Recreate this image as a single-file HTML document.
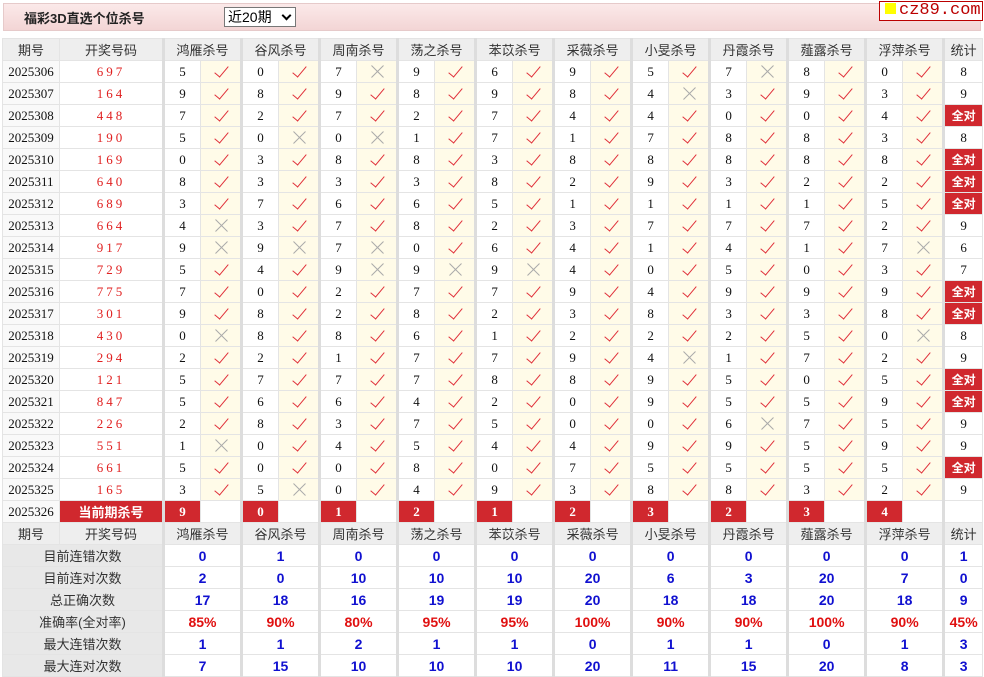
<!DOCTYPE html>
<html><head><meta charset="utf-8"><style>
body{margin:0;width:984px;height:677px;background:#fff;font-family:"Liberation Sans","Noto Sans CJK SC",sans-serif;overflow:hidden;position:relative}
.top{position:absolute;left:3px;top:3px;width:978px;height:28px;background:linear-gradient(#fbe9e9,#f3d5d5);border:1px solid #e6caca;box-sizing:border-box}
.top b{position:absolute;left:20px;top:4px;font-size:13px;color:#222}
.sel{position:absolute;left:220px;top:3px;width:72px;height:20px;border:1px solid #777;background:#fff;font-size:14px;box-sizing:border-box;padding-left:3px;line-height:18px}
.sel i{position:absolute;right:5px;top:4px;width:5px;height:5px;border-right:2px solid #000;border-bottom:2px solid #000;transform:rotate(45deg)}
.logo{position:absolute;left:879px;top:1px;width:104px;height:20px;border:1px solid #b00;background:#fff;box-sizing:border-box;font-family:"Liberation Mono",monospace;font-size:17px;color:#b00;line-height:18px}
.logo span{display:inline-block;width:11px;height:11px;background:#ff0;margin:0 3px 0 5px}
table{position:absolute;left:2px;top:38px;border-collapse:collapse;table-layout:fixed;width:980px}
td{height:21px;padding:0;border:1px solid #e4e4e4;text-align:center;font-family:"Liberation Serif","Noto Sans CJK SC",serif;font-size:13px;color:#111;overflow:hidden;white-space:nowrap}
.h td{background:#eee;font-family:"Liberation Sans","Noto Sans CJK SC",sans-serif;color:#333}
.p{background:#f9f9f9}
.n{color:#e02020;letter-spacing:3px}
.g{border-left:3px solid #ddd}
.y,.x{background:#fffbe8;position:relative}
.y::after{content:"";position:absolute;left:17px;top:2px;width:6px;height:13px;border-right:1.6px solid #e0303a;border-bottom:1.6px solid #e0303a;transform:rotate(40deg)}
.x::before,.x::after{content:"";position:absolute;left:12px;top:10px;width:17px;height:1px;background:#aaa;transform:rotate(45deg)}
.x::after{transform:rotate(-45deg)}
.a{background:#d0282e;color:#fff;font-family:"Liberation Sans","Noto Sans CJK SC",sans-serif;font-weight:bold;font-size:12px}
.r{background:#d0282e;color:#fff;font-weight:bold}
.l{background:#e8e8e8;font-family:"Liberation Sans","Noto Sans CJK SC",sans-serif;color:#333}
.s td.v{font-family:"Liberation Sans",sans-serif;font-weight:bold;color:#1010d0;font-size:14px}
.s td.v.pc{color:#e01010}
</style></head><body>
<div class="top"><b>福彩3D直选个位杀号</b><div class="sel">近20期<i></i></div></div>
<div class="logo"><span></span>cz89.com</div>
<table>
<colgroup><col style="width:57px"><col style="width:104px"><col style="width:37px"><col style="width:41px"><col style="width:37px"><col style="width:41px"><col style="width:37px"><col style="width:41px"><col style="width:37px"><col style="width:41px"><col style="width:37px"><col style="width:41px"><col style="width:37px"><col style="width:41px"><col style="width:37px"><col style="width:41px"><col style="width:37px"><col style="width:41px"><col style="width:37px"><col style="width:41px"><col style="width:37px"><col style="width:41px"><col style="width:39px"></colgroup>
<tr class="h"><td>期号</td><td>开奖号码</td><td class="g" colspan="2">鸿雁杀号</td><td class="g" colspan="2">谷风杀号</td><td class="g" colspan="2">周南杀号</td><td class="g" colspan="2">荡之杀号</td><td class="g" colspan="2">苯苡杀号</td><td class="g" colspan="2">采薇杀号</td><td class="g" colspan="2">小旻杀号</td><td class="g" colspan="2">丹霞杀号</td><td class="g" colspan="2">薤露杀号</td><td class="g" colspan="2">浮萍杀号</td><td class="g">统计</td></tr>
<tr><td class="p">2025306</td><td class="n">697</td><td class="g">5</td><td class="y"></td><td class="g">0</td><td class="y"></td><td class="g">7</td><td class="x"></td><td class="g">9</td><td class="y"></td><td class="g">6</td><td class="y"></td><td class="g">9</td><td class="y"></td><td class="g">5</td><td class="y"></td><td class="g">7</td><td class="x"></td><td class="g">8</td><td class="y"></td><td class="g">0</td><td class="y"></td><td class="g">8</td></tr>
<tr><td class="p">2025307</td><td class="n">164</td><td class="g">9</td><td class="y"></td><td class="g">8</td><td class="y"></td><td class="g">9</td><td class="y"></td><td class="g">8</td><td class="y"></td><td class="g">9</td><td class="y"></td><td class="g">8</td><td class="y"></td><td class="g">4</td><td class="x"></td><td class="g">3</td><td class="y"></td><td class="g">9</td><td class="y"></td><td class="g">3</td><td class="y"></td><td class="g">9</td></tr>
<tr><td class="p">2025308</td><td class="n">448</td><td class="g">7</td><td class="y"></td><td class="g">2</td><td class="y"></td><td class="g">7</td><td class="y"></td><td class="g">2</td><td class="y"></td><td class="g">7</td><td class="y"></td><td class="g">4</td><td class="y"></td><td class="g">4</td><td class="y"></td><td class="g">0</td><td class="y"></td><td class="g">0</td><td class="y"></td><td class="g">4</td><td class="y"></td><td class="g a">全对</td></tr>
<tr><td class="p">2025309</td><td class="n">190</td><td class="g">5</td><td class="y"></td><td class="g">0</td><td class="x"></td><td class="g">0</td><td class="x"></td><td class="g">1</td><td class="y"></td><td class="g">7</td><td class="y"></td><td class="g">1</td><td class="y"></td><td class="g">7</td><td class="y"></td><td class="g">8</td><td class="y"></td><td class="g">8</td><td class="y"></td><td class="g">3</td><td class="y"></td><td class="g">8</td></tr>
<tr><td class="p">2025310</td><td class="n">169</td><td class="g">0</td><td class="y"></td><td class="g">3</td><td class="y"></td><td class="g">8</td><td class="y"></td><td class="g">8</td><td class="y"></td><td class="g">3</td><td class="y"></td><td class="g">8</td><td class="y"></td><td class="g">8</td><td class="y"></td><td class="g">8</td><td class="y"></td><td class="g">8</td><td class="y"></td><td class="g">8</td><td class="y"></td><td class="g a">全对</td></tr>
<tr><td class="p">2025311</td><td class="n">640</td><td class="g">8</td><td class="y"></td><td class="g">3</td><td class="y"></td><td class="g">3</td><td class="y"></td><td class="g">3</td><td class="y"></td><td class="g">8</td><td class="y"></td><td class="g">2</td><td class="y"></td><td class="g">9</td><td class="y"></td><td class="g">3</td><td class="y"></td><td class="g">2</td><td class="y"></td><td class="g">2</td><td class="y"></td><td class="g a">全对</td></tr>
<tr><td class="p">2025312</td><td class="n">689</td><td class="g">3</td><td class="y"></td><td class="g">7</td><td class="y"></td><td class="g">6</td><td class="y"></td><td class="g">6</td><td class="y"></td><td class="g">5</td><td class="y"></td><td class="g">1</td><td class="y"></td><td class="g">1</td><td class="y"></td><td class="g">1</td><td class="y"></td><td class="g">1</td><td class="y"></td><td class="g">5</td><td class="y"></td><td class="g a">全对</td></tr>
<tr><td class="p">2025313</td><td class="n">664</td><td class="g">4</td><td class="x"></td><td class="g">3</td><td class="y"></td><td class="g">7</td><td class="y"></td><td class="g">8</td><td class="y"></td><td class="g">2</td><td class="y"></td><td class="g">3</td><td class="y"></td><td class="g">7</td><td class="y"></td><td class="g">7</td><td class="y"></td><td class="g">7</td><td class="y"></td><td class="g">2</td><td class="y"></td><td class="g">9</td></tr>
<tr><td class="p">2025314</td><td class="n">917</td><td class="g">9</td><td class="x"></td><td class="g">9</td><td class="x"></td><td class="g">7</td><td class="x"></td><td class="g">0</td><td class="y"></td><td class="g">6</td><td class="y"></td><td class="g">4</td><td class="y"></td><td class="g">1</td><td class="y"></td><td class="g">4</td><td class="y"></td><td class="g">1</td><td class="y"></td><td class="g">7</td><td class="x"></td><td class="g">6</td></tr>
<tr><td class="p">2025315</td><td class="n">729</td><td class="g">5</td><td class="y"></td><td class="g">4</td><td class="y"></td><td class="g">9</td><td class="x"></td><td class="g">9</td><td class="x"></td><td class="g">9</td><td class="x"></td><td class="g">4</td><td class="y"></td><td class="g">0</td><td class="y"></td><td class="g">5</td><td class="y"></td><td class="g">0</td><td class="y"></td><td class="g">3</td><td class="y"></td><td class="g">7</td></tr>
<tr><td class="p">2025316</td><td class="n">775</td><td class="g">7</td><td class="y"></td><td class="g">0</td><td class="y"></td><td class="g">2</td><td class="y"></td><td class="g">7</td><td class="y"></td><td class="g">7</td><td class="y"></td><td class="g">9</td><td class="y"></td><td class="g">4</td><td class="y"></td><td class="g">9</td><td class="y"></td><td class="g">9</td><td class="y"></td><td class="g">9</td><td class="y"></td><td class="g a">全对</td></tr>
<tr><td class="p">2025317</td><td class="n">301</td><td class="g">9</td><td class="y"></td><td class="g">8</td><td class="y"></td><td class="g">2</td><td class="y"></td><td class="g">8</td><td class="y"></td><td class="g">2</td><td class="y"></td><td class="g">3</td><td class="y"></td><td class="g">8</td><td class="y"></td><td class="g">3</td><td class="y"></td><td class="g">3</td><td class="y"></td><td class="g">8</td><td class="y"></td><td class="g a">全对</td></tr>
<tr><td class="p">2025318</td><td class="n">430</td><td class="g">0</td><td class="x"></td><td class="g">8</td><td class="y"></td><td class="g">8</td><td class="y"></td><td class="g">6</td><td class="y"></td><td class="g">1</td><td class="y"></td><td class="g">2</td><td class="y"></td><td class="g">2</td><td class="y"></td><td class="g">2</td><td class="y"></td><td class="g">5</td><td class="y"></td><td class="g">0</td><td class="x"></td><td class="g">8</td></tr>
<tr><td class="p">2025319</td><td class="n">294</td><td class="g">2</td><td class="y"></td><td class="g">2</td><td class="y"></td><td class="g">1</td><td class="y"></td><td class="g">7</td><td class="y"></td><td class="g">7</td><td class="y"></td><td class="g">9</td><td class="y"></td><td class="g">4</td><td class="x"></td><td class="g">1</td><td class="y"></td><td class="g">7</td><td class="y"></td><td class="g">2</td><td class="y"></td><td class="g">9</td></tr>
<tr><td class="p">2025320</td><td class="n">121</td><td class="g">5</td><td class="y"></td><td class="g">7</td><td class="y"></td><td class="g">7</td><td class="y"></td><td class="g">7</td><td class="y"></td><td class="g">8</td><td class="y"></td><td class="g">8</td><td class="y"></td><td class="g">9</td><td class="y"></td><td class="g">5</td><td class="y"></td><td class="g">0</td><td class="y"></td><td class="g">5</td><td class="y"></td><td class="g a">全对</td></tr>
<tr><td class="p">2025321</td><td class="n">847</td><td class="g">5</td><td class="y"></td><td class="g">6</td><td class="y"></td><td class="g">6</td><td class="y"></td><td class="g">4</td><td class="y"></td><td class="g">2</td><td class="y"></td><td class="g">0</td><td class="y"></td><td class="g">9</td><td class="y"></td><td class="g">5</td><td class="y"></td><td class="g">5</td><td class="y"></td><td class="g">9</td><td class="y"></td><td class="g a">全对</td></tr>
<tr><td class="p">2025322</td><td class="n">226</td><td class="g">2</td><td class="y"></td><td class="g">8</td><td class="y"></td><td class="g">3</td><td class="y"></td><td class="g">7</td><td class="y"></td><td class="g">5</td><td class="y"></td><td class="g">0</td><td class="y"></td><td class="g">0</td><td class="y"></td><td class="g">6</td><td class="x"></td><td class="g">7</td><td class="y"></td><td class="g">5</td><td class="y"></td><td class="g">9</td></tr>
<tr><td class="p">2025323</td><td class="n">551</td><td class="g">1</td><td class="x"></td><td class="g">0</td><td class="y"></td><td class="g">4</td><td class="y"></td><td class="g">5</td><td class="y"></td><td class="g">4</td><td class="y"></td><td class="g">4</td><td class="y"></td><td class="g">9</td><td class="y"></td><td class="g">9</td><td class="y"></td><td class="g">5</td><td class="y"></td><td class="g">9</td><td class="y"></td><td class="g">9</td></tr>
<tr><td class="p">2025324</td><td class="n">661</td><td class="g">5</td><td class="y"></td><td class="g">0</td><td class="y"></td><td class="g">0</td><td class="y"></td><td class="g">8</td><td class="y"></td><td class="g">0</td><td class="y"></td><td class="g">7</td><td class="y"></td><td class="g">5</td><td class="y"></td><td class="g">5</td><td class="y"></td><td class="g">5</td><td class="y"></td><td class="g">5</td><td class="y"></td><td class="g a">全对</td></tr>
<tr><td class="p">2025325</td><td class="n">165</td><td class="g">3</td><td class="y"></td><td class="g">5</td><td class="x"></td><td class="g">0</td><td class="y"></td><td class="g">4</td><td class="y"></td><td class="g">9</td><td class="y"></td><td class="g">3</td><td class="y"></td><td class="g">8</td><td class="y"></td><td class="g">8</td><td class="y"></td><td class="g">3</td><td class="y"></td><td class="g">2</td><td class="y"></td><td class="g">9</td></tr>
<tr><td class="p">2025326</td><td class="a" style="font-size:13px">当前期杀号</td><td class="g r">9</td><td></td><td class="g r">0</td><td></td><td class="g r">1</td><td></td><td class="g r">2</td><td></td><td class="g r">1</td><td></td><td class="g r">2</td><td></td><td class="g r">3</td><td></td><td class="g r">2</td><td></td><td class="g r">3</td><td></td><td class="g r">4</td><td></td><td class="g"></td></tr>
<tr class="h"><td>期号</td><td>开奖号码</td><td class="g" colspan="2">鸿雁杀号</td><td class="g" colspan="2">谷风杀号</td><td class="g" colspan="2">周南杀号</td><td class="g" colspan="2">荡之杀号</td><td class="g" colspan="2">苯苡杀号</td><td class="g" colspan="2">采薇杀号</td><td class="g" colspan="2">小旻杀号</td><td class="g" colspan="2">丹霞杀号</td><td class="g" colspan="2">薤露杀号</td><td class="g" colspan="2">浮萍杀号</td><td class="g">统计</td></tr>
<tr class="s"><td class="l" colspan="2">目前连错次数</td><td class="g v" colspan="2">0</td><td class="g v" colspan="2">1</td><td class="g v" colspan="2">0</td><td class="g v" colspan="2">0</td><td class="g v" colspan="2">0</td><td class="g v" colspan="2">0</td><td class="g v" colspan="2">0</td><td class="g v" colspan="2">0</td><td class="g v" colspan="2">0</td><td class="g v" colspan="2">0</td><td class="g v">1</td></tr>
<tr class="s"><td class="l" colspan="2">目前连对次数</td><td class="g v" colspan="2">2</td><td class="g v" colspan="2">0</td><td class="g v" colspan="2">10</td><td class="g v" colspan="2">10</td><td class="g v" colspan="2">10</td><td class="g v" colspan="2">20</td><td class="g v" colspan="2">6</td><td class="g v" colspan="2">3</td><td class="g v" colspan="2">20</td><td class="g v" colspan="2">7</td><td class="g v">0</td></tr>
<tr class="s"><td class="l" colspan="2">总正确次数</td><td class="g v" colspan="2">17</td><td class="g v" colspan="2">18</td><td class="g v" colspan="2">16</td><td class="g v" colspan="2">19</td><td class="g v" colspan="2">19</td><td class="g v" colspan="2">20</td><td class="g v" colspan="2">18</td><td class="g v" colspan="2">18</td><td class="g v" colspan="2">20</td><td class="g v" colspan="2">18</td><td class="g v">9</td></tr>
<tr class="s"><td class="l" colspan="2">准确率(全对率)</td><td class="g v pc" colspan="2">85%</td><td class="g v pc" colspan="2">90%</td><td class="g v pc" colspan="2">80%</td><td class="g v pc" colspan="2">95%</td><td class="g v pc" colspan="2">95%</td><td class="g v pc" colspan="2">100%</td><td class="g v pc" colspan="2">90%</td><td class="g v pc" colspan="2">90%</td><td class="g v pc" colspan="2">100%</td><td class="g v pc" colspan="2">90%</td><td class="g v pc">45%</td></tr>
<tr class="s"><td class="l" colspan="2">最大连错次数</td><td class="g v" colspan="2">1</td><td class="g v" colspan="2">1</td><td class="g v" colspan="2">2</td><td class="g v" colspan="2">1</td><td class="g v" colspan="2">1</td><td class="g v" colspan="2">0</td><td class="g v" colspan="2">1</td><td class="g v" colspan="2">1</td><td class="g v" colspan="2">0</td><td class="g v" colspan="2">1</td><td class="g v">3</td></tr>
<tr class="s"><td class="l" colspan="2">最大连对次数</td><td class="g v" colspan="2">7</td><td class="g v" colspan="2">15</td><td class="g v" colspan="2">10</td><td class="g v" colspan="2">10</td><td class="g v" colspan="2">10</td><td class="g v" colspan="2">20</td><td class="g v" colspan="2">11</td><td class="g v" colspan="2">15</td><td class="g v" colspan="2">20</td><td class="g v" colspan="2">8</td><td class="g v">3</td></tr>
</table>
</body></html>
